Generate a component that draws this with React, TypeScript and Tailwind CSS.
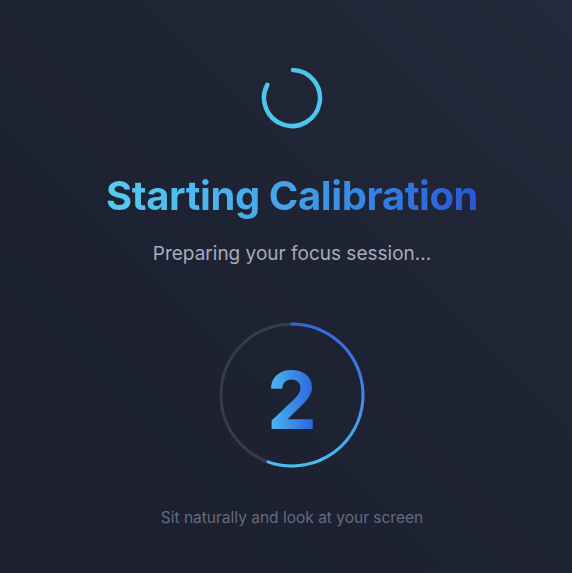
import React from "react";

const font = { fontFamily: "Inter, 'Noto Sans', sans-serif" };

function Spinner() {
  const r = 28;
  const c = 32;
  const pt = (deg: number) => {
    const a = (deg * Math.PI) / 180;
    return [c + r * Math.sin(a), c - r * Math.cos(a)];
  };
  const [x1, y1] = pt(2);
  const [x2, y2] = pt(298);
  return (
    <svg width="64" height="64" viewBox="0 0 64 64">
      <path
        d={`M ${x1} ${y1} A ${r} ${r} 0 1 1 ${x2} ${y2}`}
        fill="none"
        stroke="#4cc6ea"
        strokeWidth="4.5"
        strokeLinecap="round"
      />
    </svg>
  );
}

function CountdownRing({ value, progress }: { value: number; progress: number }) {
  const r = 71;
  const c = 75;
  const end = progress * 360;
  const a = (end * Math.PI) / 180;
  const ex = c + r * Math.sin(a);
  const ey = c - r * Math.cos(a);
  return (
    <div className="relative flex h-[150px] w-[150px] items-center justify-center">
      <svg width="150" height="150" viewBox="0 0 150 150" className="absolute inset-0">
        <defs>
          <linearGradient id="ring" x1="0" y1="4" x2="0" y2="146" gradientUnits="userSpaceOnUse">
            <stop offset="0" stopColor="#3466de" />
            <stop offset="0.5" stopColor="#3f86e6" />
            <stop offset="1" stopColor="#4cbcee" />
          </linearGradient>
        </defs>
        <circle cx={c} cy={c} r={r} fill="none" stroke="#353c4b" strokeWidth="3" />
        <path
          d={`M ${c} ${c - r} A ${r} ${r} 0 ${end > 180 ? 1 : 0} 1 ${ex} ${ey}`}
          fill="none"
          stroke="url(#ring)"
          strokeWidth="3"
          strokeLinecap="round"
        />
      </svg>
      <span
        className="relative mt-[9px] bg-linear-to-r from-[#4fbdee] to-[#2f5cdc] bg-clip-text text-[80px] font-bold leading-none text-transparent"
        style={font}
      >
        {value}
      </span>
    </div>
  );
}

export default function App() {
  return (
    <div
      className="flex min-h-[573px] flex-col items-center bg-linear-to-tr from-[#1b1f2e] via-[#1e2333] to-[#242a3b] pl-[12px] pt-[66px]"
      style={font}
    >
      <Spinner />
      <h1 className="mt-[42px] bg-linear-to-r from-[#56ccf0] via-[#44a2e8] to-[#2b55d9] bg-clip-text text-[40px] font-bold leading-[48px] tracking-[-0.01em] text-transparent">
        Starting Calibration
      </h1>
      <p className="mt-[20px] text-[19px] leading-[28px] text-[#a5acba]">
        Preparing your focus session...
      </p>
      <div className="mt-[52px]">
        <CountdownRing value={2} progress={0.555} />
      </div>
      <p className="mt-[37px] text-[15.5px] leading-[22px] text-[#646c7f]">
        Sit naturally and look at your screen
      </p>
    </div>
  );
}
